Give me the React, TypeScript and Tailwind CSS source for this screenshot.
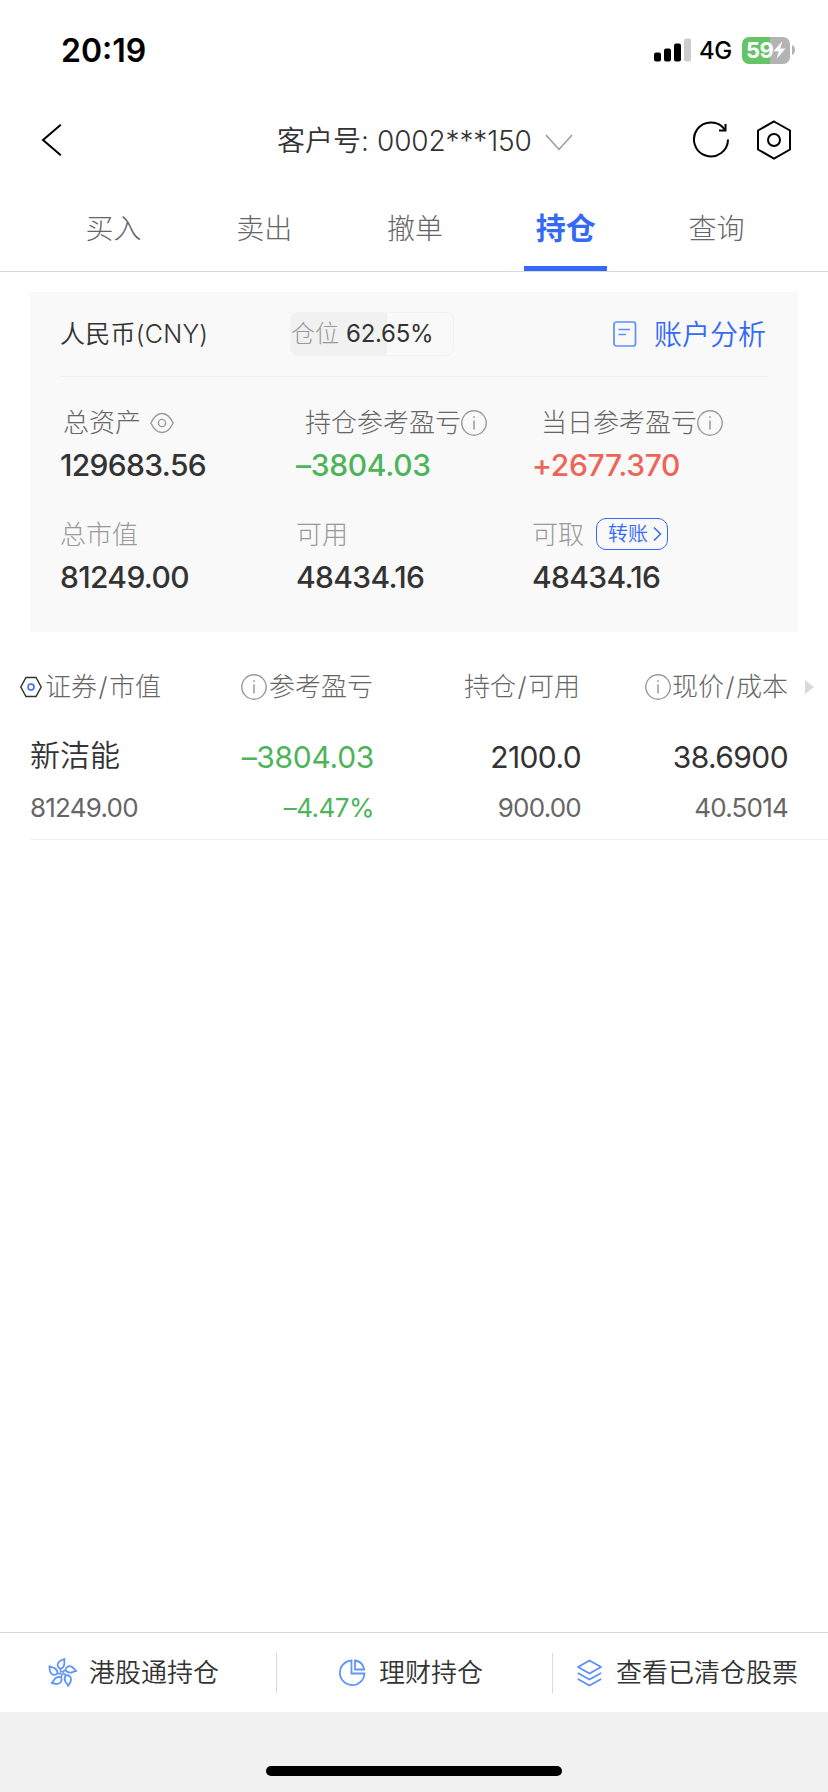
import React from 'react';

const InfoIcon = () => (
  <svg className="h-[26px] w-[26px] shrink-0" viewBox="0 0 26 26" fill="none" stroke="#999999">
    <circle cx="13" cy="13" r="12.2" strokeWidth="1.4" />
    <path d="M13 10.5V19.5" strokeWidth="1.5" />
    <path d="M13 6.2V8" strokeWidth="1.5" />
  </svg>
);

const EyeIcon = () => (
  <svg className="h-[22px] w-[24px]" viewBox="0 0 24 22" fill="none" stroke="#999999" strokeWidth="1.4">
    <path d="M.8 11C4 4.5 7.5 1.5 12 1.5S20 4.5 23.2 11C20 17.5 16.5 20.5 12 20.5S4 17.5 .8 11Z" />
    <circle cx="12" cy="11" r="3.6" />
  </svg>
);

const petals = [-4, 68, 140, 212, 284];

const FlowerIcon = () => (
  <svg className="h-[30px] w-[30px]" viewBox="-15 -15 30 30" fill="none" stroke="#6094fb" strokeWidth="1.8" strokeLinejoin="round">
    {petals.map((angle) => (
      <path
        key={angle}
        transform={`rotate(${angle})`}
        d="M-.5 -.5C-1.3 -2 -1.6 -3.5 -1.4 -5M-1.4 -4.2C-4.4 -6 -4.6 -9.3 -2 -11.5C-.4 -12.8 1.5 -13.2 3.6 -13.8C2.7 -12.2 3.3 -10.5 2.9 -8.5C2.4 -6.3 .8 -4.8 -1.4 -4.2Z"
      />
    ))}
  </svg>
);

const StatusBar = () => (
  <div className="flex h-24 items-start justify-between pl-[61px] pr-[33px]">
    <div className="mt-[31px] text-[32px] font-semibold leading-10 text-black">20:19</div>
    <div className="mt-9 flex h-7 items-center">
      <svg className="h-6 w-[38px]" viewBox="0 0 38 24">
        <rect x="0" y="14.5" width="7" height="9" rx="2" />
        <rect x="10" y="10.5" width="7" height="13" rx="2" />
        <rect x="20" y="5.5" width="7" height="18" rx="2" />
        <rect x="30" y="0.5" width="7" height="23" rx="2" fill="#cccccc" />
      </svg>
      <span className="ml-[7px] mt-0.5 w-[34px] text-[24px] font-medium leading-7 tracking-tight text-black">4G</span>
      <div className="ml-[9px] flex h-[27px] w-12 items-center justify-center rounded-[7px] bg-[linear-gradient(90deg,#65c466_28px,#b3b3b3_28px)] text-[22px] font-bold leading-7 tracking-tight text-white">
        59
        <svg className="h-[18px] w-[13px]" viewBox="0 0 13 18" fill="#ffffff">
          <path d="M9.5 0L0.5 10.2H5.8L3.5 18L12.5 7.5H7.2Z" />
        </svg>
      </div>
      <svg className="ml-0.5 h-[10px] w-[3px]" viewBox="0 0 3 10" fill="#b3b3b3">
        <path d="M0 0C4 1.5 4 8.5 0 10Z" />
      </svg>
    </div>
  </div>
);

const NavBar = () => (
  <div className="flex h-[88px] items-center pl-[41px] pr-9">
    <svg className="h-8 w-[21px]" viewBox="0 0 21 32" fill="none" stroke="#000000" strokeWidth="2">
      <path d="M19.8 .8L2 16L19.8 31.2" />
    </svg>
    <div className="ml-[215px] mt-px flex items-center text-[28px] font-[350] leading-10 text-[#333333]">
      <span className="w-[100px]">客户号:</span>
      <span className="w-[155px] tracking-[-0.005em]">0002***150</span>
      <svg className="ml-[13px] mt-1 h-[17px] w-[28px]" viewBox="0 0 28 17" fill="none" stroke="#999999" strokeWidth="1.5">
        <path d="M1 1L14 15.5L27 1" />
      </svg>
    </div>
    <div className="ml-auto flex items-center">
      <svg className="h-[38px] w-[38px]" viewBox="0 0 38 38" fill="none" stroke="#000000" strokeWidth="2">
        <path d="M36 18.5A17 17 0 1 1 33 8.8" />
        <path d="M33.5 3V9.500H27" />
      </svg>
      <svg className="ml-[26px] h-[40px] w-[36px]" viewBox="0 0 36 40" fill="none" stroke="#000000" strokeWidth="2">
        <path d="M18 1.5L34 10.5V29.5L18 38.5L2 29.5V10.5Z" />
        <circle cx="18" cy="20" r="6" />
      </svg>
    </div>
  </div>
);

const tabs = ['买入', '卖出', '撤单', '持仓', '查询'];

const Tabs = () => (
  <div className="flex h-[88px] justify-between border-b border-[#d9d9d9] pl-[38px] pr-9">
    {tabs.map((tab) =>
      tab === '持仓' ? (
        <div key={tab} className="flex w-[151px] flex-col items-center justify-between">
          <span className="mt-6 text-[30px] font-bold leading-10 text-[#3469f8]">{tab}</span>
          <span className="h-[5px] w-[83px] bg-[#3469f8]" />
        </div>
      ) : (
        <div key={tab} className="w-[151px] pt-[25px] text-center text-[28px] font-light leading-10 text-[#666666]">
          {tab}
        </div>
      )
    )}
  </div>
);

const Summary = () => (
  <div className="mx-[30px] mt-5 h-[340px] bg-[#f9f9f9] px-[30px]">
    <div className="flex h-[85px] items-center border-b border-[#f0f0f0]">
      <div className="w-[230px] text-[25px] font-[350] leading-9 tracking-[0.01em] text-[#333333]">人民币(CNY)</div>
      <div className="flex h-11 w-[164px] items-center rounded-lg border border-[#f2f2f2] bg-[linear-gradient(90deg,#f1f1f1_96px,transparent_96px)] text-[24px]">
        <span className="font-light text-[#999999]">仓位</span>
        <span className="ml-[7px] tracking-[-0.01em] text-[#333333]">62.65%</span>
      </div>
      <svg className="ml-[159px] h-[26px] w-6" viewBox="0 0 24 26" fill="none" stroke="#5b8ffb" strokeWidth="1.7">
        <rect x="1" y="1" width="21.5" height="24" rx="2.5" />
        <path d="M5.5 8.5H17M5.5 13.5H13" />
      </svg>
      <span className="ml-[17px] mt-px whitespace-nowrap text-[28px] font-[350] leading-10 text-[#3469f8]">账户分析</span>
    </div>
    <div className="grid grid-cols-3 pt-[26px] text-[26px] font-light leading-10 text-[#666666]">
      <div className="flex items-center pl-[3px]">
        总资产
        <span className="ml-[9px]">
          <EyeIcon />
        </span>
      </div>
      <div className="flex items-center whitespace-nowrap pl-[9px]">
        持仓参考盈亏
        <InfoIcon />
      </div>
      <div className="flex items-center whitespace-nowrap pl-[9px]">
        当日参考盈亏
        <InfoIcon />
      </div>
    </div>
    <div className="grid grid-cols-3 pt-[2px] text-[30px] font-medium leading-10 tracking-[-0.022em] text-[#333333]">
      <div>129683.56</div>
      <div className="tracking-[-0.01em] text-[#4eb45a]">–3804.03</div>
      <div className="tracking-[-0.01em] text-[#ee6558]">+2677.370</div>
    </div>
    <div className="grid grid-cols-3 pt-[30px] text-[26px] font-light leading-10 text-[#999999]">
      <div>总市值</div>
      <div>可用</div>
      <div className="flex items-center">
        可取
        <span className="-mt-0.5 ml-3 flex h-8 w-[72px] items-center rounded-[10px] border border-[#3469f8] pl-[11px] text-[20px] font-[350] text-[#3469f8]">
          转账
          <svg className="ml-1 h-4 w-[10px]" viewBox="0 0 10 16" fill="none" stroke="#3469f8" strokeWidth="1.5">
            <path d="M2 1.5L8.5 8L2 14.5" />
          </svg>
        </span>
      </div>
    </div>
    <div className="grid grid-cols-3 pt-[2px] text-[30px] font-medium leading-10 tracking-[-0.022em] text-[#333333]">
      <div>81249.00</div>
      <div>48434.16</div>
      <div>48434.16</div>
    </div>
  </div>
);

const Slash = () => <span className="px-[1.5px]">/</span>;

const Holdings = () => (
  <div>
    <div className="flex items-center pl-5 pr-[14px] pt-[35px] text-[26px] font-light leading-10 text-[#666666]">
      <div className="flex w-[181px] items-center whitespace-nowrap">
        <svg className="mr-[3px] h-[22px] w-[22px]" viewBox="0 0 22 22" fill="none" strokeWidth="1.5">
          <path d="M6 1.5H16L21.2 11L16 20.5H6L.8 11Z" stroke="#333333" />
          <circle cx="11" cy="11" r="3" stroke="#3469f8" />
        </svg>
        证券
        <Slash />
        市值
      </div>
      <div className="flex w-[172px] items-center justify-end gap-[2px]">
        <InfoIcon />
        参考盈亏
      </div>
      <div className="flex w-[207px] justify-end">
        持仓
        <Slash />
        可用
      </div>
      <div className="flex w-[208px] items-center justify-end">
        <InfoIcon />
        <span className="ml-px">现价</span>
        <Slash />
        成本
      </div>
      <svg className="ml-auto h-[14px] w-[9px]" viewBox="0 0 9 14" fill="#d9d9d9">
        <path d="M0 0L9 7L0 14Z" />
      </svg>
    </div>
    <div className="ml-[30px] border-b border-[#f0f0f0] pb-[11px] pr-10 pt-[30px]">
      <div className="flex items-center text-right text-[30px] leading-10 tracking-[-0.02em] text-[#333333]">
        <div className="-mt-1 w-[171px] text-left font-[350] tracking-normal">新洁能</div>
        <div className="w-[173px] tracking-[-0.01em] text-[#4eb45a]">–3804.03</div>
        <div className="w-[207px]">2100.0</div>
        <div className="w-[207px]">38.6900</div>
      </div>
      <div className="mt-[11px] flex items-center text-right text-[26px] leading-10 tracking-[-0.03em] text-[#666666]">
        <div className="w-[171px] text-left">81249.00</div>
        <div className="w-[173px] tracking-[-0.02em] text-[#4eb45a]">–4.47%</div>
        <div className="w-[207px]">900.00</div>
        <div className="w-[207px]">40.5014</div>
      </div>
    </div>
  </div>
);

const BottomBar = () => (
  <div className="flex h-20 items-center border-t border-[#d9d9d9] bg-white text-[26px] font-[350] leading-10 text-[#333333]">
    <div className="flex h-10 w-[277px] items-center border-r border-[#d9d9d9] pl-[47px]">
      <FlowerIcon />
      <span className="ml-3">港股通持仓</span>
    </div>
    <div className="flex h-10 w-[276px] items-center border-r border-[#d9d9d9] pl-[61px]">
      <svg className="h-7 w-7" viewBox="0 0 28 28" fill="none" stroke="#6094fb" strokeWidth="1.8">
        <path d="M13.5 1.5A12.3 12.3 0 1 0 26.5 14.5H13.5Z" />
        <path d="M17 1.5V10.5H26.2C25.3 5.5 21.5 2.2 17 1.5Z" />
      </svg>
      <span className="ml-[13px]">理财持仓</span>
    </div>
    <div className="flex items-center whitespace-nowrap pl-6">
      <svg className="h-7 w-[25px]" viewBox="0 0 25 28" fill="none" stroke="#5b8ffb" strokeWidth="1.8" strokeLinejoin="round">
        <path d="M12.5 1.5L24 8L12.5 14.5L1 8Z" />
        <path d="M.8 14L12.5 20.5L24.2 14M.8 20L12.5 26.5L24.2 20" />
      </svg>
      <span className="ml-[14px]">查看已清仓股票</span>
    </div>
  </div>
);

export default function App() {
  return (
    <div className="flex h-[1792px] w-[828px] flex-col overflow-hidden bg-white font-[Inter,'Noto_Sans_CJK_SC',sans-serif]">
      <StatusBar />
      <NavBar />
      <Tabs />
      <Summary />
      <Holdings />
      <div className="grow" />
      <BottomBar />
      <div className="flex h-20 items-end justify-center bg-[#f1f1f1] pb-4">
        <div className="h-[10px] w-[296px] rounded-full bg-black" />
      </div>
    </div>
  );
}
